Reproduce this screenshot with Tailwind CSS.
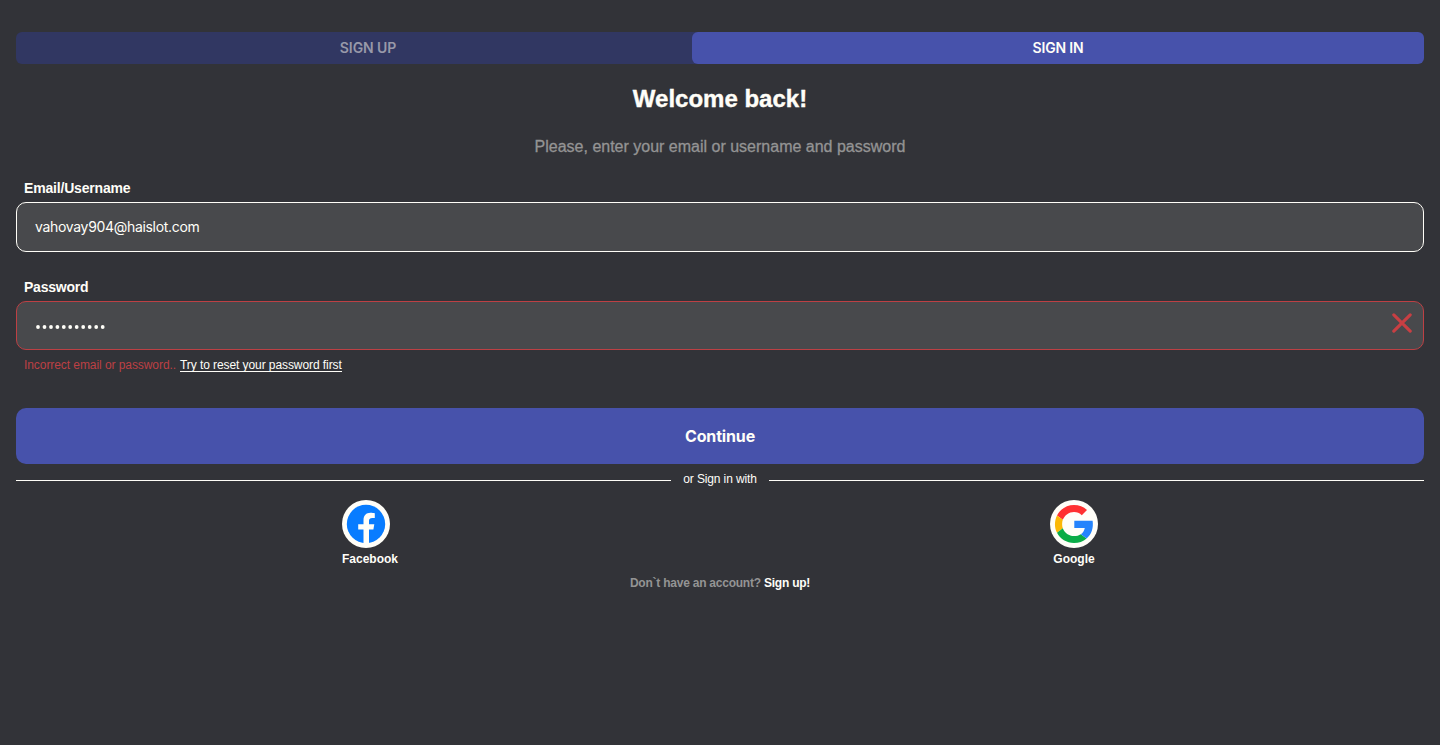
<!DOCTYPE html>
<html lang="en">
<head>
<meta charset="utf-8">
<title>Sign in</title>
<script src="https://cdn.jsdelivr.net/npm/@tailwindcss/browser@4"></script>
</head>
<body class="min-h-screen bg-[#323338] px-4 pt-8 font-['Liberation_Sans',sans-serif] text-[#fffef8]">
  <div class="flex h-8">
    <button class="w-[704px] shrink-0 rounded-md bg-[#313762] font-['Inter',sans-serif] text-sm font-semibold text-[#9899a9]"><span class="tracking-[-0.1px]">SIGN UP</span></button>
    <button class="relative -ml-7 flex-1 rounded-md bg-[#4752ab] font-['Inter',sans-serif] text-sm font-semibold"><span class="tracking-[-0.15px]">SIGN IN</span></button>
  </div>
  <h1 class="mt-[19px] text-center text-2xl leading-8 font-bold [-webkit-text-stroke:0.4px]"><span>Welcome back!</span></h1>
  <p class="mt-5 text-center text-base leading-6 text-[#949494] [-webkit-text-stroke:0.3px]"><span>Please, enter your email or username and password</span></p>

  <form>
    <label class="mt-[19px] block h-6 pl-2 text-sm leading-5 font-bold tracking-[-0.18px]"><span>Email/Username</span></label>
    <div class="flex h-[50px] items-center rounded-[10px] border border-[#fffef8] bg-[#48494c] pl-[18px] font-['Inter',sans-serif] text-sm tracking-[-0.32px]"><span>vahovay904@haislot.com</span></div>
    <label class="mt-[25px] block h-6 pl-2 text-sm leading-5 font-bold tracking-[-0.22px]"><span>Password</span></label>
    <div class="flex h-[49px] items-center justify-between rounded-[10px] border border-[#bd4044] bg-[#48494c] pr-[11px] pl-[19px]">
      <svg class="mt-[3px] h-1 w-[70px] fill-current" viewBox="0 0 70 4"><circle cx="2" cy="2" r="1.9"/><circle cx="8.5" cy="2" r="1.9"/><circle cx="15" cy="2" r="1.9"/><circle cx="21.4" cy="2" r="1.9"/><circle cx="27.8" cy="2" r="1.9"/><circle cx="34.2" cy="2" r="1.9"/><circle cx="40.7" cy="2" r="1.9"/><circle cx="47.2" cy="2" r="1.9"/><circle cx="53.7" cy="2" r="1.9"/><circle cx="60.2" cy="2" r="1.9"/><circle cx="66.7" cy="2" r="1.9"/></svg>
      <svg class="mb-[5px] size-5" viewBox="0 0 20 20" fill="none" stroke="#c83f43" stroke-width="3.1" stroke-linecap="round"><path d="M1.8 1.8 18.2 18.2M18.2 1.8 1.8 18.2"/></svg>
    </div>
    <p class="mt-[7px] flex h-4 gap-1 pl-2 text-xs leading-4 tracking-[-0.07px]"><span class="text-[#bd4044]">Incorrect email or password..</span><a class="h-[15px] border-b border-current tracking-[-0.08px]">Try to reset your password first</a></p>
    <button type="button" class="mt-[35px] h-14 w-full rounded-[10px] bg-[#4752ab] font-['Inter',sans-serif] text-base font-bold tracking-[-0.15px]"><span>Continue</span></button>
  </form>

  <div class="mt-2 flex h-4 items-center gap-3 text-xs leading-4">
    <div class="mt-px h-px flex-1 bg-[#fffef8]"></div>
    <span class="-mt-0.5 tracking-[-0.13px]">or Sign in with</span>
    <div class="mt-px h-px flex-1 bg-[#fffef8]"></div>
  </div>

  <div class="mt-3 flex justify-around text-xs leading-4 font-bold">
    <div class="w-14">
      <svg class="size-12" viewBox="0 0 48 48"><circle cx="24" cy="24" r="24" fill="#fffef8"/><circle cx="24" cy="24" r="19.2" fill="#087cff"/><path fill="#fffef8" d="M21.500 44V29.500h-5.300v-5.300h5.300v-3.900c0-4.800 2.700-7.500 7-7.500 1.700 0 3.300.2 4.300.4v4.700h-2.500c-2.700 0-3.300 1.400-3.300 3v3.300h5.300l-.9 5.300h-4.400v14.500z"/></svg>
      <span class="mt-[3px] block whitespace-nowrap">Facebook</span>
    </div>
    <div class="flex w-12 flex-col items-center">
      <svg class="size-12" viewBox="0 0 48 48"><circle cx="24" cy="24" r="24" fill="#fffef8"/><path fill="#ff3131" d="M24 5c5 0 9.500 1.800 13 5l-5.200 5.200C29.700 12.700 26.900 11.900 24 11.900c-5 0-9.300 3.200-11.200 7.800L7 15.400C10.200 9.200 16.600 5 24 5z"/><path fill="#fbb806" d="M7 15.400 12.800 19.700c-.9 2.700-.9 5.800 0 8.600L7 32.800c-2.700-5.500-2.700-11.900 0-17.400z"/><path fill="#0aac47" d="m7 32.800 5.800-4.500c1.800 4.600 6.100 7.800 11.200 7.800 2.600 0 4.900-.6 6.800-1.900l5.800 4.200C33.200 41.500 28.800 43 24 43c-7.400 0-13.800-4-17-10.200z"/><path fill="#2584fc" d="M24.300 20.700h18.300c1.100 7-1 13.600-6 17.700l-5.800-4.200c2-1.300 3.400-3.600 4-6.300H24.300z"/></svg>
      <span class="mt-[3px] block">Google</span>
    </div>
  </div>
  <p class="mt-2 text-center text-xs leading-4 font-bold tracking-[-0.23px]"><span class="text-[#949494]">Don`t have an account?</span> <a>Sign up!</a></p>
</body>
</html>
